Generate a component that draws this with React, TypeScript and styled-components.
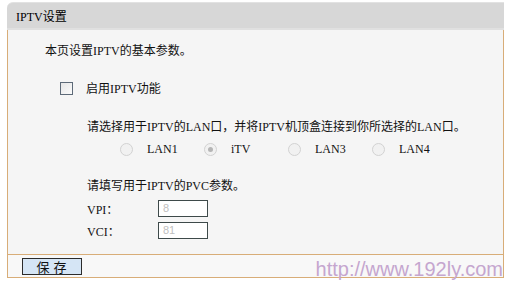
import React from "react";
import styled, { createGlobalStyle } from "styled-components";

const GlobalStyle = createGlobalStyle`
  html, body {
    margin: 0;
    padding: 0;
    background: #ffffff;
  }
  body {
    font-family: "Liberation Serif", "Noto Sans CJK SC", serif;
    font-size: 12px;
    color: #111;
  }
`;

const Page = styled.div`
  position: relative;
  width: 512px;
  height: 283px;
  padding: 2px 8px 0 7px;
  box-sizing: border-box;
`;

const Header = styled.div`
  height: 28px;
  box-sizing: border-box;
  background: #d7d7d7;
  border-top: 1px solid #e2e2e2;
  border-bottom: 2px solid #e0e0e0;
  border-top-left-radius: 6px;
  display: flex;
  align-items: center;
  padding-left: 9px;
  color: #000;
`;

const Body = styled.div`
  background: #f5f5f5;
  border-left: 1px solid #d8ad78;
  border-right: 1px solid #d8ad78;
  height: 224px;
  box-sizing: border-box;
  display: flex;
  flex-direction: column;
`;

const Row = styled.div<{ $top: number; $indent: number; $h?: number }>`
  display: flex;
  align-items: center;
  margin-top: ${(p) => p.$top}px;
  padding-left: ${(p) => p.$indent}px;
  height: ${(p) => p.$h ?? 16}px;
  white-space: nowrap;
`;

const CheckBox = styled.span`
  width: 11px;
  height: 11px;
  border: 1px solid #5d6a78;
  background: linear-gradient(135deg, #e6e6e6, #fbfbfb);
  margin-right: 13px;
`;

const RadioItem = styled.label`
  display: flex;
  align-items: center;
  width: 84px;
  color: #111;
`;

const RadioCircle = styled.span<{ $checked?: boolean }>`
  position: relative;
  width: 11px;
  height: 11px;
  border-radius: 50%;
  border: 1px solid #d2d2d2;
  background: #f1f1f1;
  margin-right: 14px;
  &::after {
    content: "";
    display: ${(p) => (p.$checked ? "block" : "none")};
    position: absolute;
    left: 3px;
    top: 3px;
    width: 5px;
    height: 5px;
    border-radius: 50%;
    background: #b5b5b5;
  }
`;

const FieldLabel = styled.span`
  width: 71px;
`;

const Field = styled.span`
  width: 44px;
  height: 15px;
  border: 1px solid #3e4a4a;
  background: #fff;
  color: #c0c0c0;
  font-family: "Liberation Sans", Arial, sans-serif;
  font-size: 11px;
  line-height: 15px;
  padding-left: 4px;
  box-sizing: content-box;
`;

const Footer = styled.div`
  height: 24px;
  box-sizing: border-box;
  border: 1px solid #d8ad78;
  background: #f8f8f8;
  display: flex;
  align-items: center;
  padding-left: 14px;
`;

const SaveButton = styled.button`
  width: 60px;
  height: 17px;
  padding: 0 0 0 3px;
  border: 1px solid #2b2b2b;
  background: #d5e5f5;
  font-family: "Noto Sans CJK SC", sans-serif;
  font-size: 13px;
  line-height: 15px;
  letter-spacing: 4px;
  color: #111;
`;

const Watermark = styled.div`
  position: absolute;
  right: 9px;
  top: 259px;
  font-family: "Liberation Sans", Arial, sans-serif;
  font-size: 20px;
  line-height: 20px;
  color: #c5a6cf;
`;

const ports = [
  { name: "LAN1", checked: false },
  { name: "iTV", checked: true },
  { name: "LAN3", checked: false },
  { name: "LAN4", checked: false },
];

export default function App() {
  return (
    <Page>
      <GlobalStyle />
      <Header>IPTV设置</Header>
      <Body>
        <Row $top={12} $indent={37}>本页设置IPTV的基本参数。</Row>
        <Row $top={22} $indent={52}>
          <CheckBox />
          启用IPTV功能
        </Row>
        <Row $top={22} $indent={79}>
          请选择用于IPTV的LAN口，并将IPTV机顶盒连接到你所选择的LAN口。
        </Row>
        <Row $top={7} $indent={112}>
          {ports.map((p) => (
            <RadioItem key={p.name}>
              <RadioCircle $checked={p.checked} />
              {p.name}
            </RadioItem>
          ))}
        </Row>
        <Row $top={20} $indent={79}>请填写用于IPTV的PVC参数。</Row>
        <Row $top={7} $indent={79} $h={17}>
          <FieldLabel>VPI：</FieldLabel>
          <Field>8</Field>
        </Row>
        <Row $top={5} $indent={79} $h={17}>
          <FieldLabel>VCI：</FieldLabel>
          <Field>81</Field>
        </Row>
      </Body>
      <Footer>
        <SaveButton>保存</SaveButton>
      </Footer>
      <Watermark>http://www.192ly.com</Watermark>
    </Page>
  );
}
